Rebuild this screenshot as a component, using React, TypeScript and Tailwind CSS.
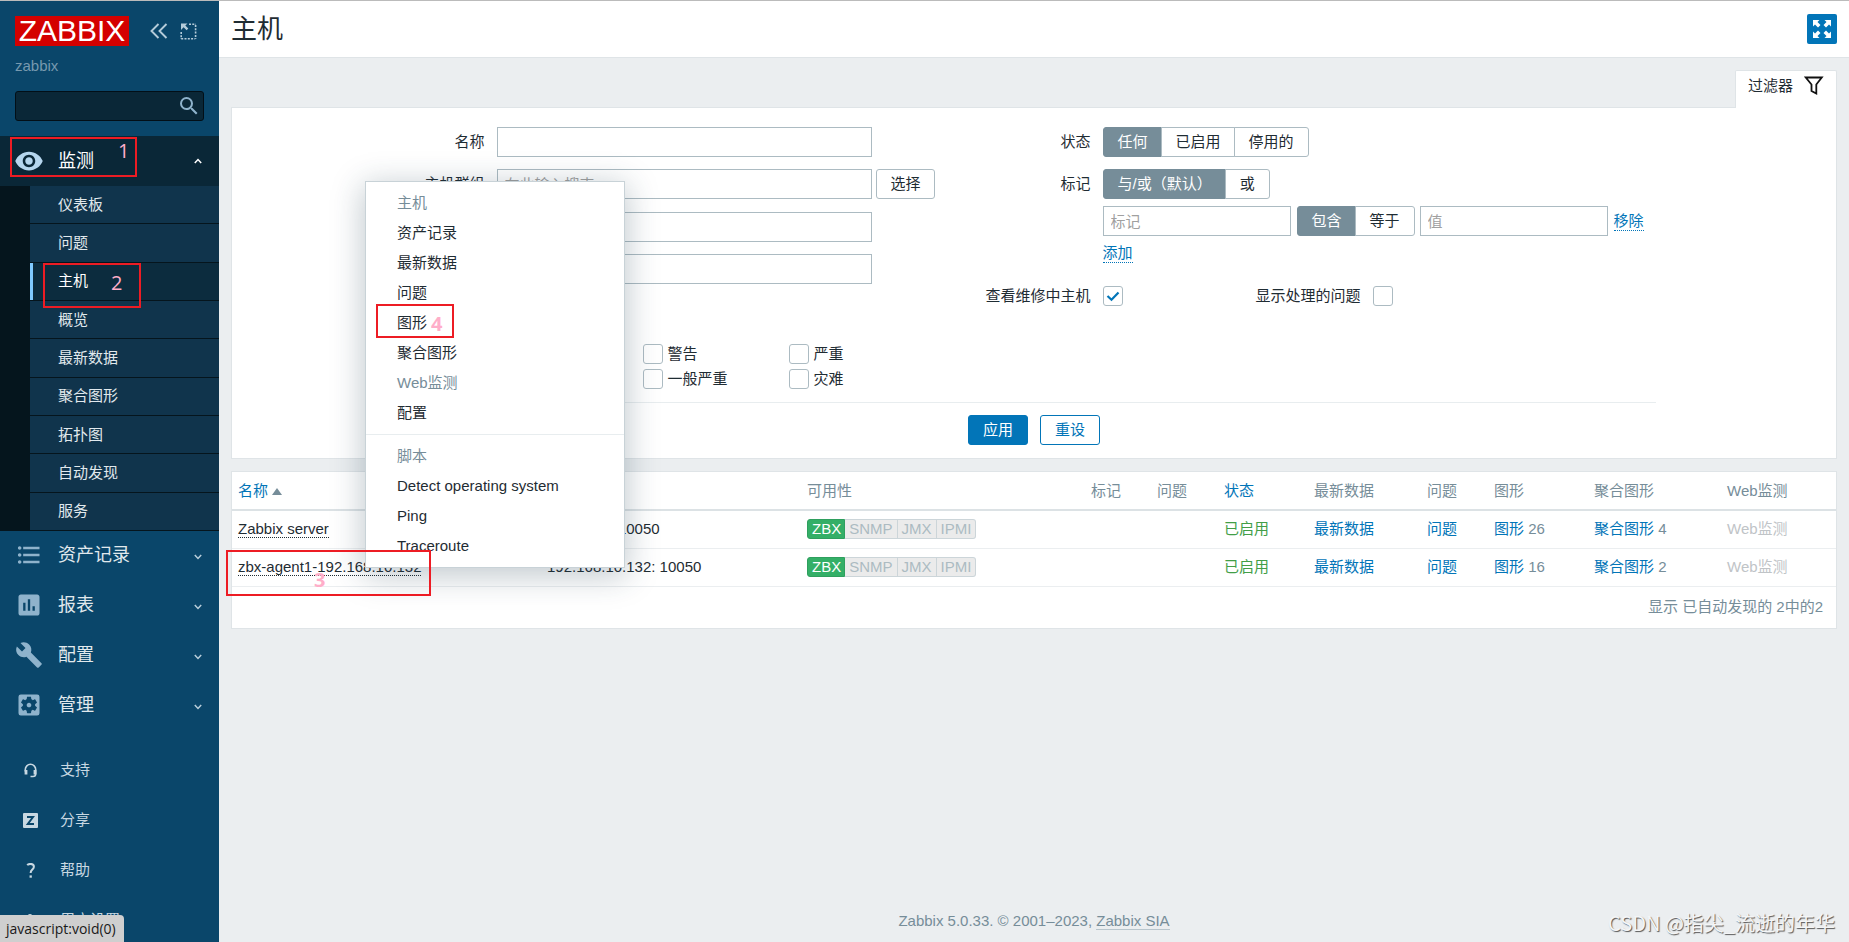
import React from "react";
import {
  MdVisibility,
  MdFormatListBulleted,
  MdInsertChart,
  MdBuild,
  MdSettingsApplications,
  MdSearch,
  MdPerson,
} from "react-icons/md";

const subItems = ["仪表板", "问题", "主机", "概览", "最新数据", "聚合图形", "拓扑图", "自动发现", "服务"];

const mainItems = [
  { label: "资产记录", icon: MdFormatListBulleted },
  { label: "报表", icon: MdInsertChart },
  { label: "配置", icon: MdBuild },
  { label: "管理", icon: MdSettingsApplications },
];

const hostActions = [
  { label: "资产记录" },
  { label: "最新数据" },
  { label: "问题" },
  { label: "图形" },
  { label: "聚合图形" },
  { label: "Web监测", disabled: true },
  { label: "配置" },
];

const scripts = ["Detect operating system", "Ping", "Traceroute"];

const hosts = [
  { name: "Zabbix server", iface: "127.0.0.1: 10050", graphs: 26, screens: 4 },
  { name: "zbx-agent1-192.168.10.132", iface: "192.168.10.132: 10050", graphs: 16, screens: 2 },
];

function Chevron({ up }: { up?: boolean }) {
  return (
    <svg width="8" height="6" viewBox="0 0 8 6" fill="none" stroke="currentColor" strokeWidth="1.5">
      <path d={up ? "M0.8 5 L4 1.5 L7.2 5" : "M0.8 1 L4 4.5 L7.2 1"} />
    </svg>
  );
}

function HeadsetIcon() {
  return (
    <svg width="15" height="15" viewBox="0 0 15 15" fill="none" stroke="currentColor" strokeWidth="1.6">
      <path d="M2.3 8.5V6.5a5.2 5.2 0 0 1 10.4 0v4.2c0 1.6-1 2.8-2.7 2.8H7.5" />
      <path d="M3 7v4.4M12 7v4.4" strokeWidth="2.8" />
    </svg>
  );
}

function ShareIcon() {
  return (
    <svg width="15" height="15" viewBox="0 0 15 15">
      <rect width="15" height="15" rx="1" fill="currentColor" />
      <path d="M4 4h6L4.800 11h6.200" fill="none" stroke="#0a466a" strokeWidth="2" />
    </svg>
  );
}

function HelpIcon() {
  return (
    <svg width="15" height="15" viewBox="0 0 15 15" fill="none" stroke="currentColor" strokeWidth="2">
      <path d="M4.2 2.2C5 1.3 6.2 .9 7.5 .9c2 0 3.4 1 3.4 2.8 0 2.700-3.200 2.900-3.200 5.800v.6" />
      <path d="M7.700 12.400v2.300" strokeWidth="2.300" />
    </svg>
  );
}

const footItems = [
  { label: "支持", icon: <HeadsetIcon /> },
  { label: "分享", icon: <ShareIcon /> },
  { label: "帮助", icon: <HelpIcon /> },
  { label: "用户设置", icon: <MdPerson size={22} /> },
];

function Sidebar() {
  return (
    <nav className="flex h-full w-[219px] shrink-0 flex-col overflow-hidden bg-[#0a466a] text-[#e1e9ed]">
      <div className="mt-[15px] flex h-[30px] shrink-0 items-center px-[15px]">
        <a
          href="#"
          aria-label="Zabbix"
          className="flex h-[30px] w-[114px] items-center justify-center bg-[#d40000] text-[30px] leading-[30px] text-white"
        >
          ZABBIX
        </a>
        <button aria-label="折叠侧边栏" className="ml-[21px] text-[#b5ccda]">
          <svg width="18" height="16" viewBox="0 0 18 16" fill="none" stroke="currentColor" strokeWidth="1.900">
            <path d="M8.500 1 L1.500 8 L8.500 15 M16.500 1 L9.500 8 L16.500 15" />
          </svg>
        </button>
        <button aria-label="隐藏侧边栏" className="ml-[12px] text-[#b5ccda]">
          <svg width="17" height="17" viewBox="0 0 17 17" fill="none" stroke="currentColor" strokeWidth="1.600">
            <path d="M9 1.200h7M15.600 2v14M1.200 15.800h14M1.200 9v7" strokeDasharray="2 1.300" />
            <path d="M1 0.500h6.500L5.300 2.600l3 3-1.700 1.700-3-3L1 7z" fill="currentColor" stroke="none" />
          </svg>
        </button>
      </div>
      <div className="mt-[11px] h-[18px] shrink-0 px-[15px] leading-[18px] text-[#7799af]">zabbix</div>
      <div className="mx-[15px] mt-4 flex h-[30px] shrink-0 items-center rounded-[3px] border border-[#020f17] bg-[#0a2737]">
        <input aria-label="搜索" className="h-full w-full min-w-0 bg-transparent px-2 outline-none" />
        <button aria-label="开始搜索" className="mr-[2px] shrink-0 text-[#8fb3cc]">
          <MdSearch size={24} />
        </button>
      </div>
      <a href="#" className="mt-[15px] flex h-[50px] shrink-0 items-center bg-[#0a2737] pl-[14px] pr-[17px] text-lg text-white">
        <MdVisibility size={30} className="text-[#b5d6ee]" />
        <span className="ml-[14px]">监测</span>
        <span className="ml-auto">
          <Chevron up />
        </span>
      </a>
      <ul className="grid h-[345px] shrink-0 grid-rows-9 bg-[#05151d] pl-[30px]">
        {subItems.map((item) => (
          <li key={item} className="border-b border-[#05151d] bg-[#10344c]">
            <a
              href="#"
              className={
                item === "主机"
                  ? "flex h-full items-center border-l-[3px] border-[#80caff] bg-[#0c2c3e] pl-[25px] text-white"
                  : "flex h-full items-center pl-7"
              }
            >
              {item}
            </a>
          </li>
        ))}
      </ul>
      {mainItems.map(({ label, icon: Icon }) => (
        <a key={label} href="#" className="flex h-[50px] shrink-0 items-center pl-[15px] pr-[17px] pb-[2px] text-lg">
          <Icon size={28} className="text-[#8fb3cc]" />
          <span className="ml-[15px]">{label}</span>
          <span className="ml-auto pt-1 text-[#b9cedb]">
            <Chevron />
          </span>
        </a>
      ))}
      <div className="mt-[14px] flex flex-col">
        {footItems.map(({ label, icon }) => (
          <a key={label} href="#" className="flex h-[50px] shrink-0 items-center pl-[21px] text-[#c8d8e2]">
            <span className="flex w-[18px] justify-center">{icon}</span>
            <span className="ml-[21px]">{label}</span>
          </a>
        ))}
      </div>
    </nav>
  );
}

function TextField({ id, className, placeholder }: { id: string; className: string; placeholder?: string }) {
  return (
    <input
      id={id}
      type="text"
      placeholder={placeholder}
      className={`h-[30px] min-w-0 border border-[#acbbc2] bg-white px-[7px] outline-none placeholder:text-[#a0a0a0] ${className}`}
    />
  );
}

function Segmented({ name, options }: { name: string; options: string[] }) {
  return (
    <div role="radiogroup" aria-label={name} className="flex h-[30px] w-fit shrink-0">
      {options.map((o, i) => (
        <label
          key={o}
          className="-ml-px flex items-center border border-[#acbbc2] bg-white pl-[14px] pr-[13px] first:ml-0 first:rounded-l-[3px] last:rounded-r-[3px] last:pr-[14px] has-checked:border-[#768d99] has-checked:bg-[#768d99] has-checked:text-white"
        >
          <input type="radio" name={name} defaultChecked={i === 0} className="sr-only" />
          {o}
        </label>
      ))}
    </div>
  );
}

function Check({ id, checked }: { id: string; checked?: boolean }) {
  return (
    <span className="relative flex size-5 shrink-0">
      <input
        id={id}
        type="checkbox"
        defaultChecked={checked}
        className="peer size-5 appearance-none rounded-[3px] border border-[#acbbc2] bg-white"
      />
      <svg
        viewBox="0 0 20 20"
        className="pointer-events-none absolute inset-0 hidden size-5 peer-checked:block"
        fill="none"
        stroke="#0275b8"
        strokeWidth="2.200"
      >
        <path d="M4.500 10 L8.500 13.800 L15.500 6.500" />
      </svg>
    </span>
  );
}

function Severity({ id, label }: { id: string; label: string }) {
  return (
    <div className="flex h-5 items-center gap-[5px]">
      <Check id={id} />
      <label htmlFor={id}>{label}</label>
    </div>
  );
}

function Filter() {
  const row = "grid grid-cols-[72px_1fr] gap-3 min-h-[30px]";
  const rrow = "grid grid-cols-[113px_1fr] gap-3";
  const lab = "text-right leading-[30px]";
  return (
    <section>
      <div className="flex justify-end">
        <a
          href="#"
          className="relative z-10 -mb-px flex h-[38px] items-start rounded-t-[2px] border border-b-0 border-[#dfe4e7] bg-white px-3 pt-[5px]"
        >
          <span className="leading-[20px]">过滤器</span>
          <svg width="20" height="19" viewBox="0 0 20 19" className="ml-[11px]" fill="none" stroke="#111" strokeWidth="1.800">
            <path d="M1.800 1.500h16L12.300 8.500v9L7.500 15V8.500z" />
          </svg>
        </a>
      </div>
      <form className="border border-[#dfe4e7] bg-white pt-[19px] pb-[13px]" onSubmit={(e) => e.preventDefault()}>
        <div className="mx-auto grid w-full max-w-[1243px] grid-cols-[5fr_6fr] border-b border-[#e8edef] pb-[13px]">
          <div className="flex flex-col gap-3">
            <div className={row}>
              <label htmlFor="name" className={lab}>名称</label>
              <TextField id="name" className="w-[375px]" />
            </div>
            <div className={`${row} min-h-[31px]`}>
              <label htmlFor="groups" className={lab}>主机群组</label>
              <div className="flex h-[31px] gap-1">
                <TextField id="groups" className="w-[375px]" placeholder="在此输入搜索" />
                <button type="button" className="h-[30px] rounded-[3px] border border-[#acbbc2] pl-[14px] pr-[13px]">选择</button>
              </div>
            </div>
            <div className={row}>
              <label htmlFor="ip" className={lab}>IP</label>
              <TextField id="ip" className="w-[375px]" />
            </div>
            <div className={row}>
              <label htmlFor="dns" className={lab}>DNS</label>
              <TextField id="dns" className="w-[375px]" />
            </div>
            <div className={row}>
              <label htmlFor="port" className={lab}>端口</label>
              <TextField id="port" className="w-[100px]" />
            </div>
            <div className={row}>
              <span className={lab}>严重性</span>
              <div className="mt-[6px] grid grid-cols-[repeat(3,146px)] gap-y-[5px]">
                <Severity id="s0" label="未分类" />
                <Severity id="s2" label="警告" />
                <Severity id="s4" label="严重" />
                <Severity id="s1" label="信息" />
                <Severity id="s3" label="一般严重" />
                <Severity id="s5" label="灾难" />
              </div>
            </div>
          </div>
          <div className="flex flex-col gap-3">
            <div className={rrow}>
              <span className={lab}>状态</span>
              <Segmented name="状态" options={["任何", "已启用", "停用的"]} />
            </div>
            <div className={rrow}>
              <span className={lab}>标记</span>
              <div className="flex flex-col gap-[7px]">
                <Segmented name="标记" options={["与/或（默认）", "或"]} />
                <div className="flex items-center">
                  <TextField id="tag" className="w-[188px]" placeholder="标记" />
                  <div className="ml-[6px] mr-[5px]">
                    <Segmented name="运算符" options={["包含", "等于"]} />
                  </div>
                  <TextField id="value" className="w-[188px]" placeholder="值" />
                  <button type="button" className="ml-[6px] shrink-0 border-b border-dotted border-[#0275b8] leading-[19px] text-[#0275b8]">
                    移除
                  </button>
                </div>
                <button type="button" className="w-fit border-b border-dotted border-[#0275b8] leading-[19px] text-[#0275b8]">
                  添加
                </button>
              </div>
            </div>
            <div className={`${rrow} mt-[6px]`}>
              <label htmlFor="maintenance" className={lab}>查看维修中主机</label>
              <div className="flex items-center">
                <Check id="maintenance" checked />
                <label htmlFor="suppressed" className="ml-[133px] mr-3">显示处理的问题</label>
                <Check id="suppressed" />
              </div>
            </div>
          </div>
        </div>
        <div className="mt-3 flex justify-center gap-3">
          <button type="submit" className="h-[30px] rounded-[3px] border border-[#0275b8] bg-[#0275b8] px-[14px] text-white">应用</button>
          <button type="reset" className="h-[30px] rounded-[3px] border border-[#0275b8] px-[14px] text-[#0275b8]">重设</button>
        </div>
      </form>
    </section>
  );
}

function Availability() {
  return (
    <div className="flex w-fit leading-[18px]">
      <span className="rounded-l-[3px] border border-[#2f9f5e] bg-[#34af67] pl-1 pr-[3px] text-white">ZBX</span>
      {["SNMP", "JMX", "IPMI"].map((t) => (
        <span key={t} className="border border-l-0 border-[#ccd5d9] bg-[#ebebeb] px-1 text-[#acbbc2] last:rounded-r-[3px]">
          {t}
        </span>
      ))}
    </div>
  );
}

function HostTable() {
  const th = "px-[6px] text-left font-normal whitespace-nowrap";
  const td = "px-[6px] whitespace-nowrap";
  const link = "text-[#0275b8]";
  return (
    <section className="mt-3 border border-[#dfe4e7] bg-white">
      <table className="w-full table-fixed border-collapse">
        <colgroup>
          <col />
          <col className="w-[260px]" />
          <col className="w-[284px]" />
          <col className="w-[66px]" />
          <col className="w-[67px]" />
          <col className="w-[90px]" />
          <col className="w-[113px]" />
          <col className="w-[67px]" />
          <col className="w-[100px]" />
          <col className="w-[133px]" />
          <col className="w-[115px]" />
        </colgroup>
        <thead>
          <tr className="h-[38px] border-b-2 border-[#dce2e5] text-[#768d99]">
            <th className={th}>
              <a href="#" className={link}>
                名称
                <svg width="10" height="7" viewBox="0 0 10 7" className="ml-1 inline-block">
                  <path d="M5 0 L10 7 H0z" fill="#768d99" />
                </svg>
              </a>
            </th>
            <th className={th}>接口</th>
            <th className={th}>可用性</th>
            <th className={th}>标记</th>
            <th className={th}>问题</th>
            <th className={th}><a href="#" className={link}>状态</a></th>
            <th className={th}>最新数据</th>
            <th className={th}>问题</th>
            <th className={th}>图形</th>
            <th className={th}>聚合图形</th>
            <th className={th}>Web监测</th>
          </tr>
        </thead>
        <tbody>
          {hosts.map((h) => (
            <tr key={h.name} className="h-[38px] border-b border-[#ebeef0]">
              <td className={td}>
                <a href="#" className="border-b border-dotted border-[#1f2c33]">{h.name}</a>
              </td>
              <td className={td}>{h.iface}</td>
              <td className={td}><Availability /></td>
              <td className={td} />
              <td className={td} />
              <td className={`${td} text-[#429e47]`}>已启用</td>
              <td className={td}><a href="#" className={link}>最新数据</a></td>
              <td className={td}><a href="#" className={link}>问题</a></td>
              <td className={`${td} text-[#768d99]`}><a href="#" className={link}>图形</a> {h.graphs}</td>
              <td className={`${td} text-[#768d99]`}><a href="#" className={link}>聚合图形</a> {h.screens}</td>
              <td className={`${td} text-[#c0c4c7]`}>Web监测</td>
            </tr>
          ))}
        </tbody>
        <tfoot>
          <tr className="h-[42px] text-[#768d99]">
            <td colSpan={11} className="pr-[13px] text-right">显示 已自动发现的 2中的2</td>
          </tr>
        </tfoot>
      </table>
    </section>
  );
}

function HostMenu() {
  const item = "flex h-[30px] w-full items-center pl-[31px] text-left";
  return (
    <div className="absolute left-[365px] top-[180px] z-20 w-[260px] border border-[#c8d2d7] bg-white py-[6px] shadow-[0_6px_30px_2px_rgba(31,60,80,0.28)]">
      <h3 className={`${item} text-[#768d99]`}>主机</h3>
      {hostActions.map((a) => (
        <button key={a.label} disabled={a.disabled} className={`${item} disabled:text-[#768d99]`}>
          {a.label}
        </button>
      ))}
      <hr className="my-[6px] border-[#e8edef]" />
      <h3 className={`${item} text-[#768d99]`}>脚本</h3>
      {scripts.map((s) => (
        <button key={s} className={item}>{s}</button>
      ))}
    </div>
  );
}

function Marks() {
  const box = "pointer-events-none absolute z-30 border-2 border-[#ed1c24]";
  const num = "pointer-events-none absolute z-30 text-xl leading-5 text-[#ffaec9] font-['Open_Sans','Noto_Sans',sans-serif]";
  return (
    <>
      <div className={`${box} left-[10px] top-[136px] h-[40px] w-[127px]`} />
      <span className={`${num} left-[118px] top-[140px]`}>1</span>
      <div className={`${box} left-[43px] top-[262px] h-[45px] w-[98px]`} />
      <span className={`${num} left-[111px] top-[272px]`}>2</span>
      <div className={`${box} left-[226px] top-[549px] h-[46px] w-[205px]`} />
      <span className={`${num} left-[314px] top-[569px] font-bold`}>3</span>
      <div className={`${box} left-[376px] top-[303px] h-[34px] w-[78px]`} />
      <span className={`${num} left-[431px] top-[313px] font-bold`}>4</span>
    </>
  );
}

export default function App() {
  return (
    <div className="relative flex h-screen overflow-hidden border-t border-[#bbbbbb] bg-[#ebeef0] text-[15px] leading-[20px] text-[#1f2c33] font-['Liberation_Sans','Noto_Sans_CJK_SC',sans-serif]">
      <Sidebar />
      <div className="flex min-w-0 flex-1 flex-col">
        <header className="flex h-[57px] shrink-0 items-center justify-between border-b border-[#dfe4e7] bg-white px-3">
          <h1 className="text-[26px] leading-[34px]">主机</h1>
          <button aria-label="全屏" className="flex size-[30px] items-center justify-center rounded-[2px] bg-[#0275b8] text-white">
            <svg width="18" height="18" viewBox="0 0 18 18" fill="currentColor">
              <path d="M0 0h6.500L4.500 2l3 3L5 7.500l-3-3-2 2z" />
              <path d="M18 0v6.500L16 4.500l-3 3L10.500 5l3-3-2-2z" />
              <path d="M0 18v-6.500l2 2 3-3L7.500 13l-3 3 2 2z" />
              <path d="M18 18h-6.500l2-2-3-3L13 10.500l3 3 2-2z" />
            </svg>
          </button>
        </header>
        <main className="px-3 pt-3">
          <Filter />
          <HostTable />
        </main>
        <footer className="mt-auto pb-[11px] text-center text-[#768d99]">
          Zabbix 5.0.33. © 2001–2023, <a href="#" className="border-b border-[#b8c5cc]">Zabbix SIA</a>
        </footer>
      </div>
      <HostMenu />
      <Marks />
      <div className="absolute bottom-0 left-0 z-30 h-[27px] rounded-tr-[4px] bg-[#cfcfcf] pl-[6px] pr-2 text-sm leading-[27px] text-[#1a1a1a] font-['Open_Sans','Noto_Sans',sans-serif]">
        javascript:void(0)
      </div>
      <div className="absolute bottom-[7px] right-[14px] text-xl leading-6 text-[#f4f5f6] [text-shadow:1px_1px_1px_#555] font-['Noto_Sans_CJK_SC',sans-serif]">
        CSDN @指尖_流逝的年华
      </div>
    </div>
  );
}
